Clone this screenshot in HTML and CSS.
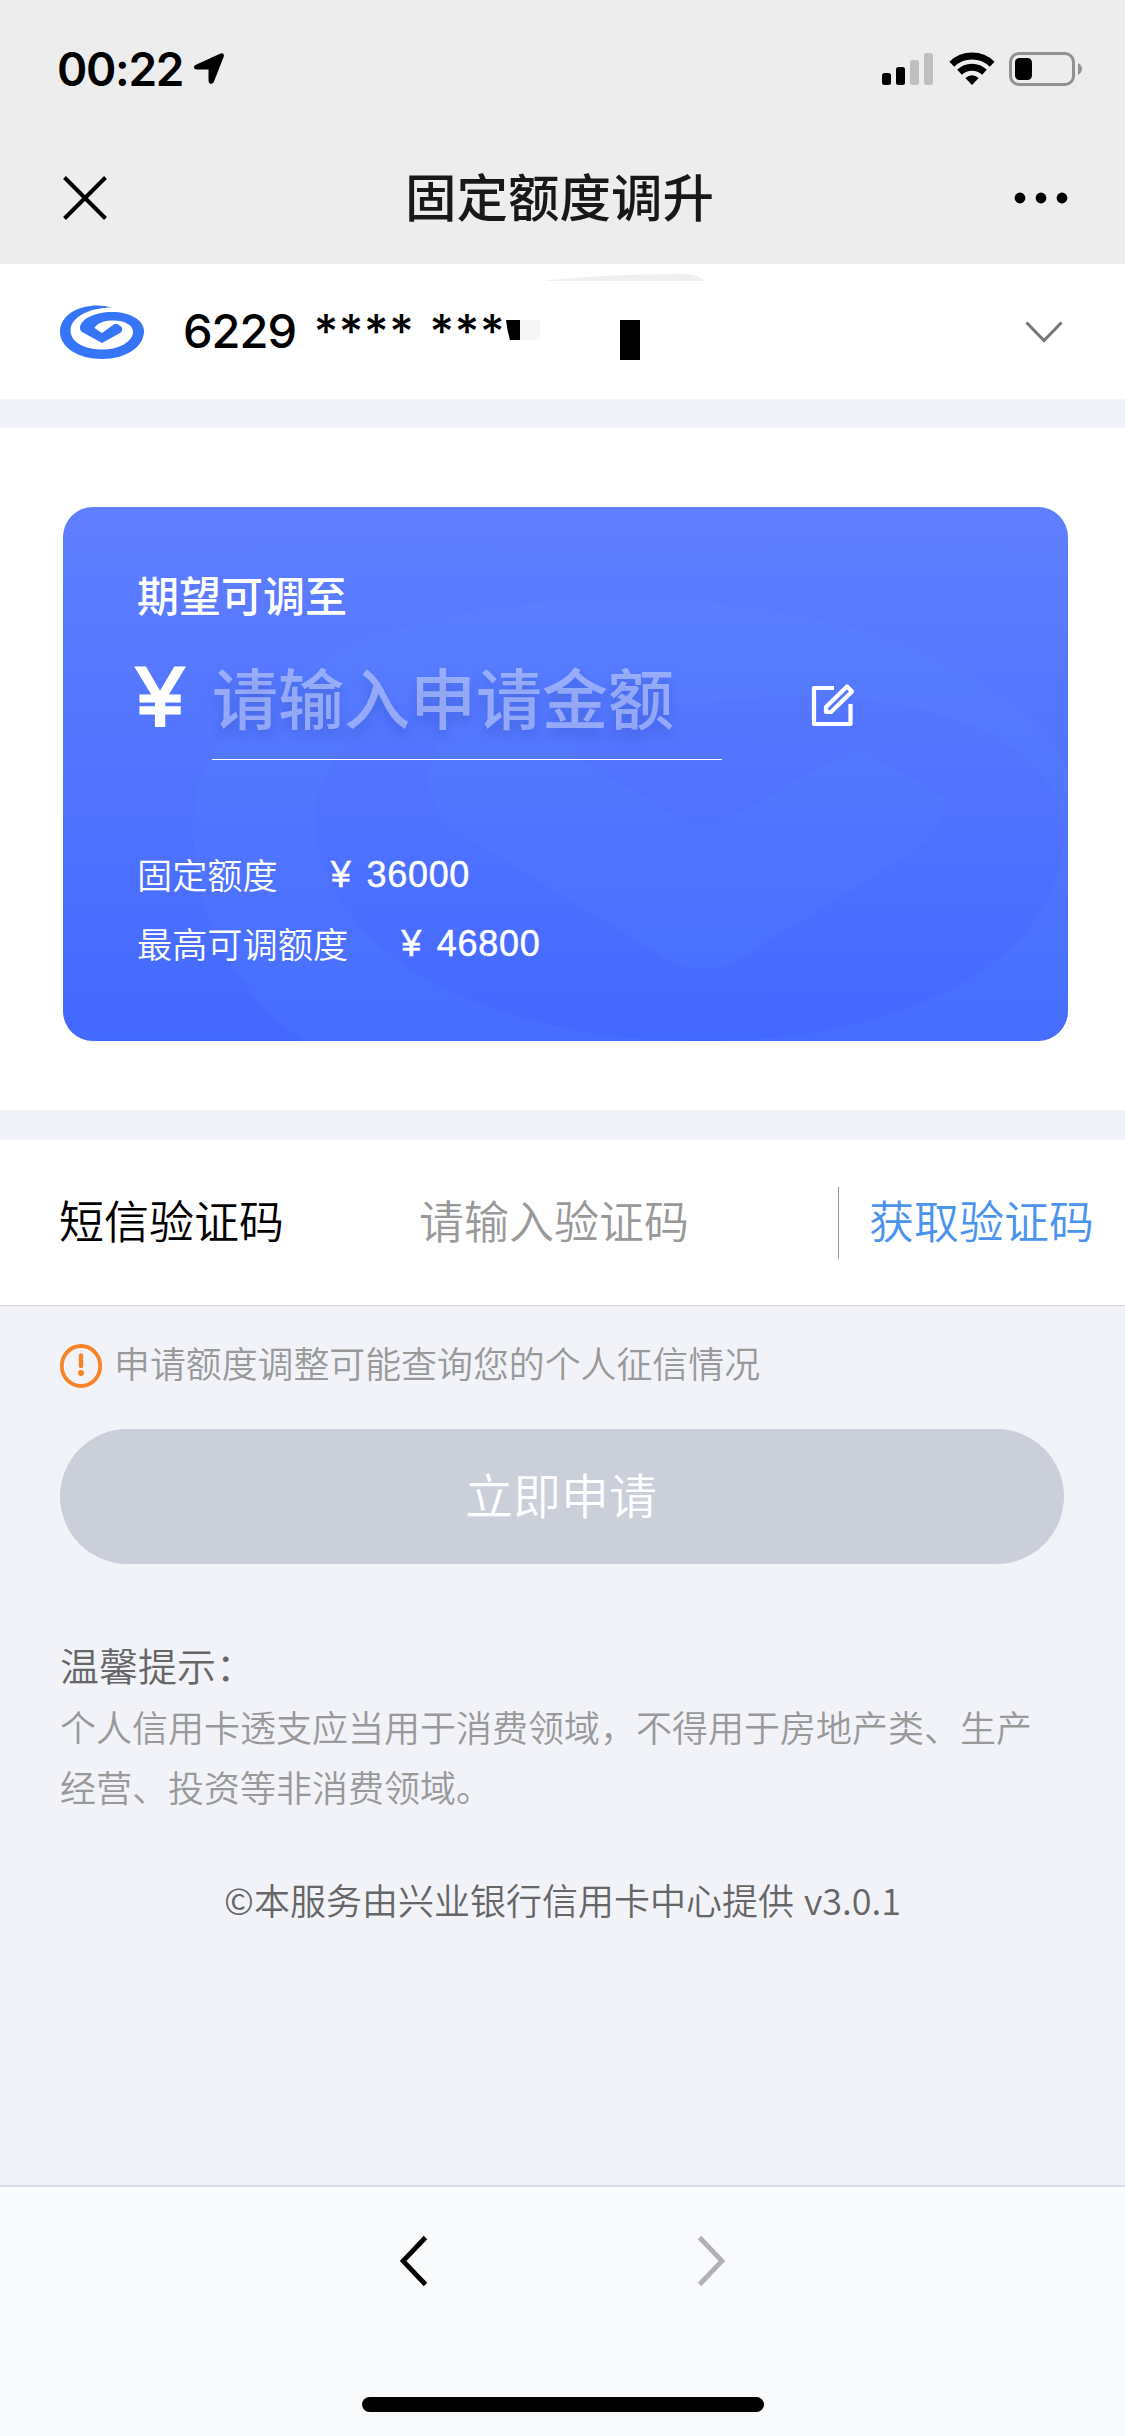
FILE: index.html
```html
<!DOCTYPE html>
<html lang="zh-CN">
<head>
<meta charset="utf-8">
<title>固定额度调升</title>
<link rel="stylesheet" href="styles.css">
</head>
<body>
<div class="screen">
  <header class="header">
    <div class="status">
      <div class="clock"><span class="time">00:22</span>
        <svg class="location" width="30" height="31" viewBox="0 0 30 31"><path d="M2.500 11.500L26.500 0.500Q30.500 -0.500 29.800 3.500L20 28.500Q18.800 31.500 16.500 30.700Q14.500 30 14.500 27.500V16.500H3Q0 16.500 0 14Q0 12.400 2.500 11.500Z"/></svg>
      </div>
      <div class="indicators">
        <svg width="52" height="34" viewBox="0 0 52 34"><rect x="0" y="21" width="9" height="12" rx="2.500"/><rect x="14" y="15" width="9" height="18" rx="2.500"/><g fill="#bfbfbf"><rect x="28" y="8" width="9" height="25" rx="2.500"/><rect x="42" y="1" width="9" height="32" rx="2.500"/></g></svg>
        <svg class="wifi" width="46" height="34" viewBox="0 0 46 34"><g fill="none" stroke="#000" stroke-width="6.800"><path d="M2.800 12.200A29 29 0 0 1 43.200 12.200"/><path d="M10.500 20.300A18 18 0 0 1 35.500 20.300"/></g><path d="M16.300 26Q23 20.500 29.700 26L23 33Z"/></svg>
        <svg class="battery" width="74" height="34" viewBox="0 0 74 34"><rect x="1.500" y="1.500" width="63" height="31" rx="8.500" fill="none" stroke="#919191" stroke-width="3"/><rect x="6" y="6" width="17" height="22" rx="4.500"/><path d="M69 11Q73 13.500 73 17T69 23Z" fill="#919191"/></svg>
      </div>
    </div>
    <nav class="navbar">
      <svg class="close" width="44" height="44" viewBox="0 0 44 44"><path d="M1.500 1.500L42.500 42.500M42.500 1.500L1.500 42.500" fill="none" stroke="#000" stroke-width="4"/></svg>
      <h1 class="title">固定额度调升</h1>
      <svg width="54" height="12" viewBox="0 0 54 12"><circle cx="6" cy="6" r="5.400"/><circle cx="27" cy="6" r="5.400"/><circle cx="48" cy="6" r="5.400"/></svg>
    </nav>
  </header>

  <section class="account">
    <svg class="logo" width="84" height="54" viewBox="0 0 84 54"><path d="M52 2.500C30 -4 0 5 0 27C0 42 18 54 42 54C66 54 84 42 84 26C84 15 70 7 52 7C35 7 20 14 20 23.500Q20 26 23 27.500L42 38L60 28Q63.500 25.500 61.500 22L57.500 19Q55.500 18 53 20L42 28L34.500 23C37 18 44 15.500 53 15.500C65 15.500 73 20 73 27C73 36 60 44.500 43 44.500C24 44.500 10.500 37 10.500 25.500C10.500 12 30 2.500 52 2.500Z" fill="#3674f8"/></svg>
    <span class="number">6229 <span class="stars">**** ***</span></span>
    <svg class="chevron" width="38" height="22" viewBox="0 0 38 22"><path d="M1.500 1.500L19 19.500L36.500 1.500" fill="none" stroke="#777" stroke-width="3"/></svg>
    <svg class="redaction" width="136" height="40" viewBox="0 0 136 40"><path d="M0 0H14V20H4Q1 10 0 0Z"/><path d="M14 0H34V20H14Z" fill="#f6f6f6"/><path d="M114 0H134V40H114Z"/></svg>
    <svg class="smudge" width="162" height="7" viewBox="0 0 162 7"><path d="M0 7Q60 0 140 0Q155 0 162 7Z" fill="#efefef"/></svg>
  </section>

  <section class="quota">
    <div class="card">
      <svg class="watermark" width="1005" height="534" viewBox="0 0 1005 534"><path fill-rule="evenodd" d="M130 320C130 190 300 92 560 92C760 92 940 150 1005 260V534H240C165 480 130 400 130 320ZM252 310C252 430 400 534 640 534C850 534 1000 450 1000 325C1000 245 890 190 745 190C610 190 480 215 520 255L640 325L795 240L880 290Q885 320 850 345L680 450Q640 475 600 450L395 325Q350 290 375 235C400 150 260 210 252 310Z"/></svg>
      <h2 class="card-title">期望可调至</h2>
      <div class="amount">
        <span class="yen">¥</span>
        <span class="amount-input">请输入申请金额</span>
        <svg class="edit" width="44" height="44" viewBox="0 0 44 44"><path d="M23 5H3V41H39.500V21M15 24L36 3.500L41 8.500L20 29H15Z" fill="none" stroke="#fff" stroke-width="4.200" stroke-linejoin="round"/></svg>
      </div>
      <p class="line"><span>固定额度</span><span class="value"><i>¥</i>36000</span></p>
      <p class="line"><span>最高可调额度</span><span class="value"><i>¥</i>46800</span></p>
    </div>
  </section>

  <section class="sms">
    <span class="sms-label">短信验证码</span>
    <span class="sms-input">请输入验证码</span>
    <span class="sms-send">获取验证码</span>
  </section>

  <main class="content">
    <p class="notice"><svg width="42" height="44" viewBox="0 0 42 44"><ellipse cx="21" cy="22" rx="19.200" ry="20" fill="none" stroke="#f78429" stroke-width="3.800"/><path d="M21 11.500V22" stroke="#f78429" stroke-width="4.400" stroke-linecap="round"/><circle cx="21" cy="29" r="3" fill="#f78429"/></svg><span>申请额度调整可能查询您的个人征信情况</span></p>
    <div class="submit">立即申请</div>
    <h3 class="tips-title">温馨提示：</h3>
    <p class="tips">个人信用卡透支应当用于消费领域，不得用于房地产类、生产经营、投资等非消费领域。</p>
    <p class="copyright">©本服务由兴业银行信用卡中心提供 <span class="version">v3.0.1</span></p>
  </main>

  <footer class="toolbar">
    <div class="arrows">
      <svg width="28" height="52" viewBox="0 0 28 52"><path d="M25.500 2.500L3 26L25.500 49.500" fill="none" stroke="#000" stroke-width="4.800"/></svg>
      <svg width="28" height="52" viewBox="0 0 28 52"><path d="M2.500 2.500L25 26L2.500 49.500" fill="none" stroke="#b0b1b3" stroke-width="4.800"/></svg>
    </div>
    <div class="home"></div>
  </footer>
</div>
</body>
</html>
```
FILE: styles.css
```css
* { box-sizing: border-box; margin: 0; padding: 0; }
body { background: #f2f3f9; font-family: "Noto Sans CJK SC", sans-serif; font-weight: 350; color: #000; }
svg { display: block; flex: none; }
.screen { width: 1125px; height: 2436px; display: flex; flex-direction: column; overflow: hidden; }

.header { height: 264px; background: #ededed; flex: none; }
.status { height: 132px; padding: 0 42px 0 57px; display: flex; align-items: flex-start; justify-content: space-between; }
.clock { display: flex; align-items: center; gap: 11px; padding-top: 40px; height: 98px; }
.time { font: 600 46px/58px Inter, sans-serif; letter-spacing: -1.3px; }
.location { margin-bottom: 1px; }
.indicators { display: flex; align-items: center; gap: 14.5px; padding-top: 52px; }
.navbar { height: 132px; padding: 0 57px 0 63px; display: flex; align-items: center; justify-content: space-between; }
.close { margin-bottom: 1px; }
.title { font-size: 51.5px; font-weight: 500; line-height: 70px; color: #181818; padding: 0 2px 6px 0; }

.account { position: relative; height: 135px; background: #fff; padding: 0 62px 0 60px; display: flex; align-items: center; flex: none; }
.number { margin-left: 39px; padding-bottom: 2px; font: 500 47px/60px Inter, sans-serif; letter-spacing: -1px; }
.stars { letter-spacing: 0.7px; word-spacing: 2px; margin-left: 6px; }
.chevron { margin-left: auto; }
.redaction { position: absolute; left: 506px; top: 56px; }
.smudge { position: absolute; left: 543px; top: 10px; }

.quota { margin-top: 29px; height: 682px; background: #fff; padding: 79px 57px 0 63px; flex: none; }
.card { position: relative; height: 534px; border-radius: 30px; background: linear-gradient(#5f7fff, #4368ff); color: #fff; padding: 56px 76px 0 74px; overflow: hidden; }
.watermark { position: absolute; left: 0; top: 0; fill: rgba(90, 150, 255, .13); }
.card-title { position: relative; font-size: 42px; font-weight: 500; line-height: 62px; }
.amount { position: relative; display: flex; height: 135px; }
.yen { width: 75px; font: 600 83px/143px "Liberation Sans", sans-serif; font-weight: 400; -webkit-text-stroke: 3px #fff; }
.amount-input { width: 510px; height: 135px; font-size: 66px; font-weight: 500; line-height: 140px; color: rgba(255, 255, 255, .4); text-shadow: 0 8px 12px rgba(40, 70, 180, .35); border-bottom: 1.500px solid #fff; }
.edit { margin: 58px 0 0 89px; }
.line { position: relative; display: flex; gap: 53px; font-size: 35.2px; line-height: 69px; }
.amount + .line { margin-top: 79px; }
.value { display: flex; gap: 15px; padding-top: 1px; height: 69px; font-family: "Liberation Sans", sans-serif; font-size: 36px; letter-spacing: 0.7px; -webkit-text-stroke: 0.5px #fff; }
.value i { font-style: normal; }

.sms { margin-top: 30px; height: 166px; background: #fff; border-bottom: 1px solid #d2d2d6; padding-left: 59px; display: flex; align-items: center; font-size: 45px; line-height: 66px; flex: none; }
.sms-label { width: 360px; padding-bottom: 6px; }
.sms-input { width: 420px; padding-bottom: 6px; color: #999; border-right: 1px solid #999; }
.sms-send { margin-left: 30px; padding-bottom: 6px; color: #4a94f0; }

.content { flex: 1; padding: 0 60px; }
.notice { display: flex; align-items: center; gap: 12px; margin-top: 30px; height: 60px; font-size: 35.9px; line-height: 52px; color: #999; }
.notice span { padding-bottom: 9px; }
.submit { margin-top: 33px; height: 135px; width: 1004px; border-radius: 68px; background: #cbcfd9; color: #fff; font-size: 48px; line-height: 129px; text-align: center; padding-right: 2px; }
.tips-title { margin-top: 70px; font-size: 39px; line-height: 60px; font-weight: 350; color: #666; }
.tips { margin-top: 2px; font-size: 36px; line-height: 60px; color: #999; }
.copyright { margin-top: 53px; font-size: 36px; line-height: 60px; color: #666; text-align: center; white-space: nowrap; }
.version { margin-left: 2px; }

.toolbar { height: 251px; background: #f9fafc; border-top: 2px solid #dadce3; display: flex; flex-direction: column; align-items: center; flex: none; }
.arrows { display: flex; gap: 269px; margin-top: 48px; }
.home { width: 402px; height: 15px; border-radius: 8px; background: #000; margin-top: 110px; }
```
